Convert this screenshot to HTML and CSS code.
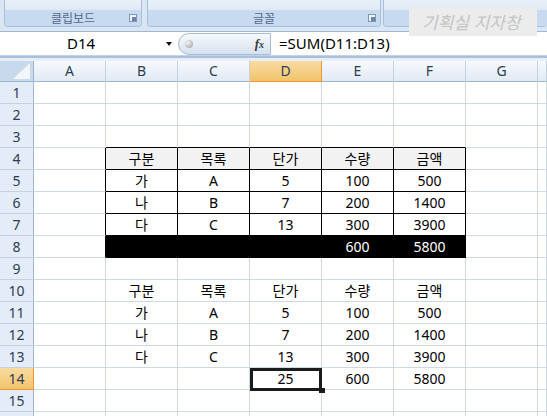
FILE: index.html
```html
<!DOCTYPE html>
<html lang="ko">
<head>
    <meta charset="UTF-8">
    <title>Sheet1</title>
    <link rel="stylesheet" href="styles.css">
</head>
<body>
    <div class="ribbon">
        <div class="group g1">
            <div class="group-body"></div>
            <div class="group-label">클립보드
                <svg class="launcher" width="8" height="8" viewBox="0 0 8 8"><rect x="0.5" y="0.5" width="7" height="7" fill="#eef3fa" stroke="#7f95b6"/><rect x="3" y="3" width="4" height="4" fill="#6d84a8"/></svg>
            </div>
        </div>
        <div class="group g2">
            <div class="group-body"></div>
            <div class="group-label">글꼴
                <svg class="launcher" width="8" height="8" viewBox="0 0 8 8"><rect x="0.5" y="0.5" width="7" height="7" fill="#eef3fa" stroke="#7f95b6"/><rect x="3" y="3" width="4" height="4" fill="#6d84a8"/></svg>
            </div>
        </div>
        <div class="group g3">
            <div class="group-body"></div>
            <div class="group-label"></div>
        </div>
    </div>
    <div class="watermark">기획실 지자창</div>

    <div class="fbar">
        <div class="name-box">
            <span class="name">D14</span>
            <span class="dd"></span>
        </div>
        <div class="fx-pill">
            <span class="dot"></span>
            <span class="fx">f<small>x</small></span>
        </div>
        <div class="formula">=SUM(D11:D13)</div>
    </div>
    <div class="strip"></div>

    <div class="sheet">
        <div class="row head">
            <div class="corner">
                <svg width="33" height="20" viewBox="0 0 33 20"><polygon points="30,2 30,18 13,18" fill="#f2f5fa"/></svg>
            </div>
            <div class="ch">A</div><div class="ch">B</div><div class="ch">C</div><div class="ch on">D</div><div class="ch">E</div><div class="ch">F</div><div class="ch">G</div><div class="ch rest"></div>
        </div>
        <div class="row"><div class="rh">1</div><div class="c"></div><div class="c"></div><div class="c"></div><div class="c"></div><div class="c"></div><div class="c"></div><div class="c"></div><div class="c rest"></div></div>
        <div class="row"><div class="rh">2</div><div class="c"></div><div class="c"></div><div class="c"></div><div class="c"></div><div class="c"></div><div class="c"></div><div class="c"></div><div class="c rest"></div></div>
        <div class="row"><div class="rh">3</div><div class="c"></div><div class="c tt"></div><div class="c tt"></div><div class="c tt"></div><div class="c tt"></div><div class="c tt"></div><div class="c"></div><div class="c rest"></div></div>
        <div class="row"><div class="rh">4</div><div class="c tl"></div><div class="c t th">구분</div><div class="c t th">목록</div><div class="c t th">단가</div><div class="c t th">수량</div><div class="c t th">금액</div><div class="c"></div><div class="c rest"></div></div>
        <div class="row"><div class="rh">5</div><div class="c tl"></div><div class="c t">가</div><div class="c t">A</div><div class="c t">5</div><div class="c t">100</div><div class="c t">500</div><div class="c"></div><div class="c rest"></div></div>
        <div class="row"><div class="rh">6</div><div class="c tl"></div><div class="c t">나</div><div class="c t">B</div><div class="c t">7</div><div class="c t">200</div><div class="c t">1400</div><div class="c"></div><div class="c rest"></div></div>
        <div class="row"><div class="rh">7</div><div class="c tl"></div><div class="c t">다</div><div class="c t">C</div><div class="c t">13</div><div class="c t">300</div><div class="c t">3900</div><div class="c"></div><div class="c rest"></div></div>
        <div class="row"><div class="rh">8</div><div class="c tl"></div><div class="c blk"></div><div class="c blk"></div><div class="c blk"></div><div class="c blk">600</div><div class="c blk">5800</div><div class="c"></div><div class="c rest"></div></div>
        <div class="row"><div class="rh">9</div><div class="c"></div><div class="c"></div><div class="c"></div><div class="c"></div><div class="c"></div><div class="c"></div><div class="c"></div><div class="c rest"></div></div>
        <div class="row"><div class="rh">10</div><div class="c"></div><div class="c">구분</div><div class="c">목록</div><div class="c">단가</div><div class="c">수량</div><div class="c">금액</div><div class="c"></div><div class="c rest"></div></div>
        <div class="row"><div class="rh">11</div><div class="c"></div><div class="c">가</div><div class="c">A</div><div class="c">5</div><div class="c">100</div><div class="c">500</div><div class="c"></div><div class="c rest"></div></div>
        <div class="row"><div class="rh">12</div><div class="c"></div><div class="c">나</div><div class="c">B</div><div class="c">7</div><div class="c">200</div><div class="c">1400</div><div class="c"></div><div class="c rest"></div></div>
        <div class="row"><div class="rh">13</div><div class="c"></div><div class="c">다</div><div class="c">C</div><div class="c">13</div><div class="c">300</div><div class="c">3900</div><div class="c"></div><div class="c rest"></div></div>
        <div class="row"><div class="rh on">14</div><div class="c"></div><div class="c"></div><div class="c"></div><div class="c sel">25</div><div class="c">600</div><div class="c">5800</div><div class="c"></div><div class="c rest"></div></div>
        <div class="row"><div class="rh">15</div><div class="c"></div><div class="c"></div><div class="c"></div><div class="c"></div><div class="c"></div><div class="c"></div><div class="c"></div><div class="c rest"></div></div>
        <div class="row"><div class="rh"></div><div class="c"></div><div class="c"></div><div class="c"></div><div class="c"></div><div class="c"></div><div class="c"></div><div class="c"></div><div class="c rest"></div></div>
    </div>
</body>
</html>
```

FILE: styles.css
```css
* {
    box-sizing: border-box;
}

body {
    margin: 0;
    width: 547px;
    height: 416px;
    overflow: hidden;
    position: relative;
    background: #fff;
    font-family: "Noto Sans", "Noto Sans CJK KR", sans-serif;
    color: #000;
}

/* ribbon */

.ribbon {
    height: 31px;
    display: flex;
    padding-left: 4px;
    background: #dbe6f3;
}

.group {
    height: 27px;
    display: flex;
    flex-direction: column;
    border: 1px solid #a9c0dd;
    border-top: none;
    border-radius: 0 0 4px 4px;
    overflow: hidden;
}

.g1 {
    width: 138px;
    margin-right: 5px;
}

.g2 {
    width: 234px;
    margin-right: 2px;
}

.g3 {
    flex: 1;
    border-right: none;
}

.group-body {
    height: 10px;
    background: linear-gradient(#e9f0f9, #dfe9f5);
}

.group-label {
    flex: 1;
    position: relative;
    background: #c8daef;
    color: #52678b;
    font-family: "Noto Sans CJK KR", sans-serif;
    font-size: 12px;
    line-height: 16px;
    text-align: center;
}

.launcher {
    position: absolute;
    right: 4px;
    top: 4px;
}

.watermark {
    position: absolute;
    left: 409px;
    top: 8px;
    width: 128px;
    height: 28px;
    padding-left: 13px;
    background: #ececec;
    color: #c4c4c4;
    font-family: "Noto Sans CJK KR", sans-serif;
    font-size: 17px;
    font-style: italic;
    line-height: 27px;
    white-space: nowrap;
}

/* formula bar */

.fbar {
    height: 25px;
    display: flex;
    background: #fff;
    border-top: 1px solid #9fb7d6;
    border-bottom: 1px solid #c2d3e8;
}

.name-box {
    width: 178px;
    position: relative;
    font-size: 15px;
    line-height: 23px;
}

.name {
    display: block;
    width: 162px;
    text-align: center;
}

.dd {
    position: absolute;
    left: 166px;
    top: 10px;
    border-left: 3px solid transparent;
    border-right: 3px solid transparent;
    border-top: 4px solid #111;
}

.fx-pill {
    width: 93px;
    margin-top: 1px;
    display: flex;
    align-items: center;
    justify-content: space-between;
    padding: 0 6px 0 6px;
    border: 1px solid #a6bcd7;
    border-radius: 11px 0 0 11px;
    background: linear-gradient(#f6f9fc, #d6e1ee);
}

.dot {
    width: 8px;
    height: 8px;
    border-radius: 50%;
    background: radial-gradient(circle at 35% 35%, #f4f4f4, #9a9a9a);
}

.fx {
    font-family: "Liberation Serif", serif;
    font-style: italic;
    font-weight: bold;
    font-size: 13px;
    color: #3a3a3a;
}

.fx small {
    font-size: 10px;
}

.formula {
    flex: 1;
    padding-left: 8px;
    font-size: 15px;
    line-height: 23px;
}

.strip {
    height: 5px;
    border-top: 2px solid #a9c0dc;
    background: #e8eef7;
}

/* sheet */

.row {
    display: flex;
    height: 22px;
}

.row.head {
    height: 21px;
}

.corner {
    width: 34px;
    flex: none;
    background: #c9d9ec;
    border-right: 1px solid #9eb6ce;
    border-bottom: 1px solid #9eb6ce;
}

.corner svg {
    display: block;
}

.ch {
    width: 72px;
    flex: none;
    background: linear-gradient(#f7fafd, #e1e9f3);
    border-right: 1px solid #c3d1e3;
    border-bottom: 1px solid #9eb6ce;
    color: #2c3d55;
    font-size: 14px;
    line-height: 20px;
    text-align: center;
}

.ch.on {
    background: linear-gradient(#f9dba1, #f1c46a);
    border-right-color: #f29536;
    border-bottom-color: #f29536;
}

.rh {
    width: 34px;
    flex: none;
    background: #e4ecf7;
    border-right: 1px solid #9eb6ce;
    border-bottom: 1px solid #c3d1e3;
    color: #2c3d55;
    font-size: 14px;
    line-height: 21px;
    text-align: center;
}

.rh.on {
    background: linear-gradient(#f9dba1, #f1c46a);
    border-right-color: #f29536;
    border-bottom-color: #f29536;
}

.c {
    width: 72px;
    flex: none;
    border-right: 1px solid #d0d7e5;
    border-bottom: 1px solid #d0d7e5;
    font-size: 14px;
    line-height: 21px;
    text-align: center;
}

.rest {
    flex: 1;
}

.tt {
    border-bottom-color: #000;
}

.tl {
    border-right-color: #000;
}

.t {
    border-right-color: #000;
    border-bottom-color: #000;
}

.th {
    background: #f2f2f2;
}

.blk {
    background: #000;
    border-color: #000;
    color: #fff;
}

.sel {
    position: relative;
}

.sel::after {
    content: "";
    position: absolute;
    left: 0;
    top: 0;
    right: -1px;
    bottom: -2px;
    border: 3px solid #1b1b1b;
}

.sel::before {
    content: "";
    position: absolute;
    right: -4px;
    bottom: -4px;
    width: 6px;
    height: 5px;
    background: #1b1b1b;
    z-index: 1;
}
```
